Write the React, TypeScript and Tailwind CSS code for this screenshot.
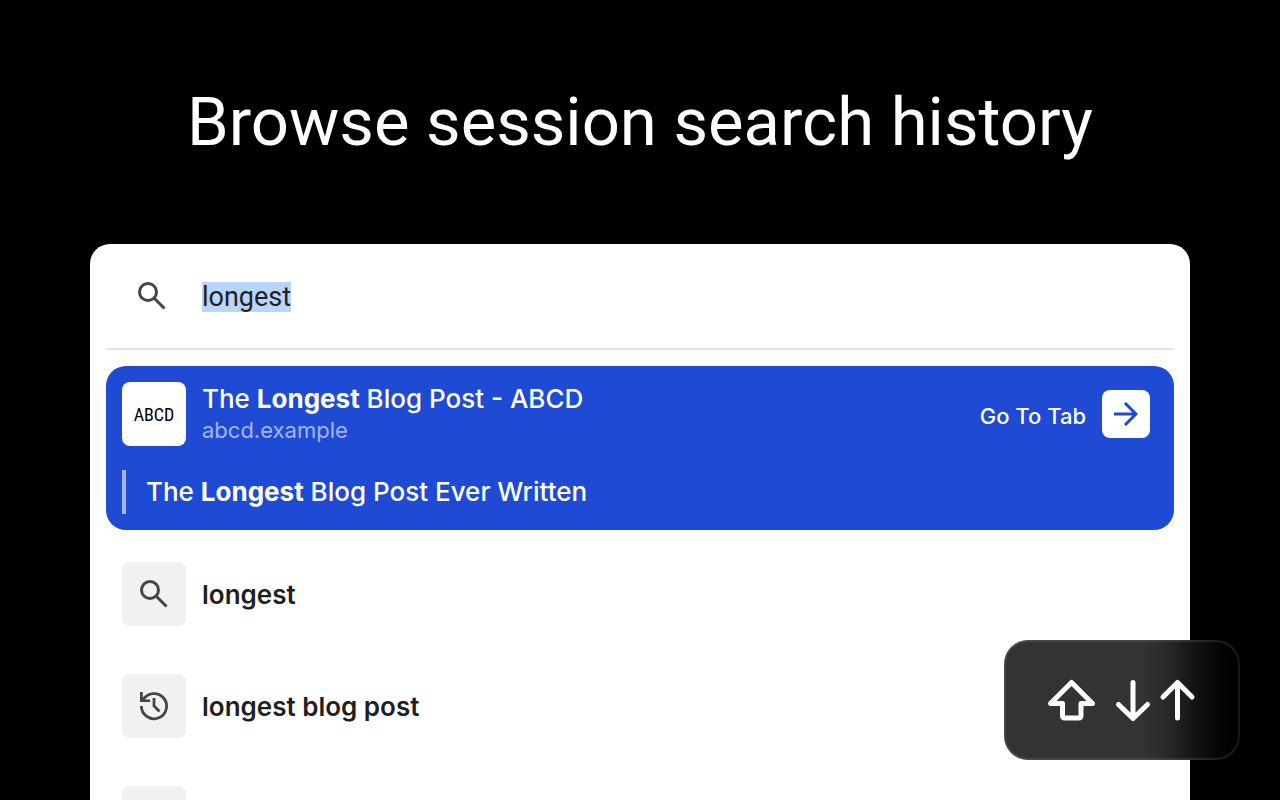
import React, { useEffect, useRef, useState } from "react";

const SearchIcon = () => (
  <svg viewBox="0 0 32 32" className="size-8 shrink-0 fill-none stroke-[#454545]" strokeWidth="3" aria-hidden="true">
    <circle cx="12" cy="12" r="8.5" />
    <path d="M18 18l10.5 10.5" />
  </svg>
);

const HistoryIcon = () => (
  <svg viewBox="0 0 32 32" className="size-8 shrink-0 fill-none stroke-[#454545]" strokeWidth="2.8" aria-hidden="true">
    <path d="M2 2h2.800v5.200L7 9.400h5V12H2z" className="fill-[#454545] stroke-none" />
    <path d="M5 10A12.600 12.600 0 1 1 3.400 16" />
    <path d="M16 8v8l5.500 5.500" />
  </svg>
);

const suggestions = [
  { text: "longest", Icon: SearchIcon },
  { text: "longest blog post", Icon: HistoryIcon },
  { text: "", Icon: HistoryIcon },
];

const SearchBox = () => {
  const [query, setQuery] = useState("longest");
  const inputRef = useRef<HTMLInputElement>(null);

  useEffect(() => {
    inputRef.current?.focus();
    inputRef.current?.select();
  }, []);

  return (
    <div className="flex h-[106px] items-center gap-8 border-b-2 border-[#e3e3e3] pl-[30px]">
      <SearchIcon />
      <input
        ref={inputRef}
        type="text"
        aria-label="Search tabs"
        value={query}
        onChange={(e) => setQuery(e.target.value)}
        className="min-w-0 flex-1 bg-transparent pt-0.5 pl-0.5 font-['Roboto',sans-serif] text-[27px] leading-[30px] text-[#1f1f1f] caret-transparent outline-none selection:bg-[#b9d5fb] selection:text-[#1f1f1f]"
      />
    </div>
  );
};

const ActiveResult = () => (
  <section className="mt-4 rounded-[20px] bg-[#1f4ad4] p-4 text-white">
    <div className="flex items-center gap-4">
      <div className="flex size-16 shrink-0 items-center justify-center rounded-lg bg-white font-['Roboto_Condensed',sans-serif] text-[18px] text-black">
        ABCD
      </div>
      <div className="min-w-0 flex-1">
        <h2 className="truncate text-[26px] leading-8 font-medium">
          The <b className="font-bold">Longest</b> Blog Post - ABCD
        </h2>
        <p className="truncate text-[22px] leading-[30px] text-white/60">abcd.example</p>
      </div>
      <button type="button" className="mr-2 flex items-center gap-4 text-[22px] font-medium">
        <span className="pt-1">Go To Tab</span>
        <span className="flex size-12 items-center justify-center rounded-lg bg-white">
          <svg viewBox="0 0 24 24" className="size-6 fill-none stroke-[#1f4ad4]" strokeWidth="3" aria-hidden="true">
            <path d="M0 12h22M11 1l11 11-11 11" />
          </svg>
        </span>
      </button>
    </div>
    <p className="mt-6 border-l-4 border-white/60 pl-5 text-[26px] leading-[44px] font-medium">
      The <b className="font-bold">Longest</b> Blog Post Ever Written
    </p>
  </section>
);

const Shortcut = () => (
  <div className="absolute right-10 bottom-10 flex h-[120px] w-[236px] items-center justify-center rounded-3xl border-2 border-white/10 bg-[linear-gradient(90deg,#333_58%,#2a2a2a_69%,#151515_80%,#050505_91%,#000_98%)] bg-origin-border">
    <svg viewBox="0 0 152 48" className="h-12 w-[152px] fill-none stroke-white" strokeWidth="5" strokeLinecap="round" strokeLinejoin="round" role="img" aria-label="Shift, down or up">
      <path d="M25.500 6.500L4.500 27.500H16.500V40a2 2 0 0 0 2 2H33a2 2 0 0 0 2-2V27.500H46.500Z" />
      <path d="M87 6.500V42M72.500 28.500L87 42.500l14.500-14" />
      <path d="M131.500 42V6.500M117 21l14.500-14.500L146 21" />
    </svg>
  </div>
);

export default function App() {
  return (
    <main className="relative flex h-screen flex-col overflow-hidden bg-black font-['Inter',sans-serif]">
      <h1 className="shrink-0 pt-20 text-center font-['Roboto',sans-serif] text-[67px] leading-[84px] text-white">
        Browse session search history
      </h1>
      <div className="mx-[90px] mt-20 shrink-0 rounded-t-[20px] bg-white px-4">
        <SearchBox />
        <ActiveResult />
        <ul className="pt-2">
          {suggestions.map(({ text, Icon }, i) => (
            <li key={i}>
              <button type="button" className="flex h-28 w-full items-center gap-4 px-4 text-left text-[26px] font-semibold text-[#1f1f1f]">
                <span className="flex size-16 items-center justify-center rounded-lg bg-[#f1f1f1]">
                  <Icon />
                </span>
                {text}
              </button>
            </li>
          ))}
        </ul>
      </div>
      <Shortcut />
    </main>
  );
}
